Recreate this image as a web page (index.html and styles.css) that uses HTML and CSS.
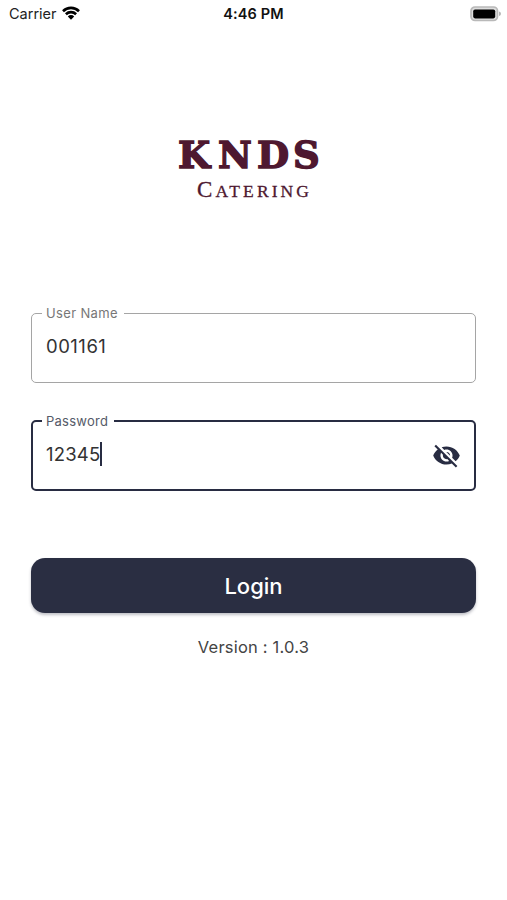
FILE: index.html
```html
<!DOCTYPE html>
<html lang="en">
<head>
    <meta charset="UTF-8">
    <meta name="viewport" content="width=device-width, initial-scale=1.0">
    <title>KNDS Catering - Login</title>
    <link rel="stylesheet" href="styles.css">
</head>
<body>
    <header class="status-bar">
        <div class="carrier">
            <span>Carrier</span>
            <svg class="wifi" width="18" height="14" viewBox="0 0 18 14">
                <path d="M1 5.2a11.4 11.4 0 0 1 16 0M3.9 8.2a7.3 7.3 0 0 1 10.2 0" fill="none" stroke="#000" stroke-width="2.6"/>
                <path d="M5.8 10.4a4.6 4.6 0 0 1 6.4 0L9 13.8z"/>
            </svg>
        </div>
        <div class="time">4:46 PM</div>
        <svg class="battery" width="31" height="16" viewBox="0 0 31 16">
            <rect x="1" y="1" width="26.5" height="13.5" rx="4" fill="#ddd" stroke="#b9b9b9" stroke-width="1.7"/>
            <rect x="3.2" y="3.4" width="22" height="9" rx="1.8"/>
            <path d="M29 5.5q2 .5 2 2.3t-2 2.3z" fill="#b5b5b5"/>
        </svg>
    </header>

    <main>
        <svg class="logo" width="160" height="88" viewBox="0 0 160 88">
            <text class="logo-name" x="7 47 86 122" y="47">KNDS</text>
            <text class="logo-sub" x="26" y="76" textLength="112"><tspan class="logo-cap">C</tspan>ATERING</text>
        </svg>

        <form id="loginForm">
            <fieldset class="field">
                <legend>User Name</legend>
                <span class="value username">001161</span>
            </fieldset>
            <fieldset class="field focused">
                <legend>Password</legend>
                <span class="value password">12345<i class="caret"></i></span>
                <svg class="eye" width="29" height="29" viewBox="0 0 24 24">
                    <path d="M12 7c2.76 0 5 2.24 5 5 0 .65-.13 1.26-.36 1.83l2.92 2.92c1.51-1.26 2.7-2.89 3.43-4.75-1.73-4.39-6-7.5-11-7.5-1.4 0-2.74.25-3.98.7l2.16 2.16C10.74 7.13 11.35 7 12 7zM2 4.27l2.28 2.28.46.46C3.08 8.3 1.78 10.02 1 12c1.73 4.39 6 7.5 11 7.5 1.55 0 3.03-.3 4.38-.84l.42.42L19.73 22 21 20.73 3.27 3 2 4.27zM7.53 9.8l1.55 1.55c-.05.21-.08.43-.08.65 0 1.66 1.34 3 3 3 .22 0 .44-.03.65-.08l1.55 1.55c-.67.33-1.41.53-2.2.53-2.76 0-5-2.24-5-5 0-.79.2-1.53.53-2.2zm4.31-.78l3.15 3.15.02-.16c0-1.66-1.34-3-3-3l-.17.01z"/>
                </svg>
            </fieldset>
            <button type="button">Login</button>
        </form>
        <p class="version">Version : 1.0.3</p>
    </main>
</body>
</html>
```
FILE: styles.css
```css
body {
    margin: 0;
    height: 900px;
    font-family: Inter, sans-serif;
    background-color: #fff;
    overflow: hidden;
}
.status-bar {
    display: grid;
    grid-template-columns: 1fr auto 1fr;
    align-items: center;
    height: 27px;
    padding: 0 6px 0 9px;
    font-size: 14.5px;
    color: #222;
}
.carrier {
    display: flex;
    align-items: center;
    gap: 5px;
}
.wifi {
    margin-top: -2px;
}
.time {
    margin-right: 3px;
    font-weight: 600;
    letter-spacing: 0.1px;
    color: #111;
}
.battery {
    justify-self: end;
}
main {
    display: flex;
    flex-direction: column;
    padding: 94px 31px 0;
}
.logo {
    align-self: center;
    margin-right: 5px;
}
.logo-name {
    font: bold 37px "DejaVu Serif", serif;
    fill: #4e1830;
    stroke: #4e1830;
    stroke-width: 1.4px;
}
.logo-sub {
    font: 17.5px "Liberation Serif", serif;
    fill: #4e1830;
    stroke: #4e1830;
    stroke-width: 0.3px;
}
.logo-cap {
    font-size: 23px;
}
form {
    display: flex;
    flex-direction: column;
    margin-top: 96px;
}
.field {
    display: flex;
    justify-content: space-between;
    box-sizing: border-box;
    height: 78px;
    min-width: 0;
    margin: 0 0 30px;
    padding: 0 14px 0 10px;
    border: 1.5px solid #a5a5a5;
    border-radius: 5px;
}
legend {
    height: 16px;
    padding: 0 6px 0 4px;
    font-size: 13px;
    line-height: 16px;
    letter-spacing: 0.35px;
    color: #777;
}
.value {
    display: flex;
    height: 25px;
    margin-top: 13px;
    padding-left: 4px;
    font-size: 18.5px;
    line-height: 25px;
    color: #333;
}
.username {
    letter-spacing: 0.5px;
}
.password {
    letter-spacing: 0.2px;
}
.caret {
    width: 2px;
    height: 24px;
    background: #282c42;
}
.focused {
    padding: 0 13px 0 9px;
    border: 2.5px solid #282c42;
}
.focused legend {
    letter-spacing: 0.25px;
    color: #555a68;
}
.eye {
    margin: 12px 0 0;
    fill: #282c42;
}
button {
    height: 55px;
    margin-top: 37px;
    border: none;
    border-radius: 14px;
    background: #2a2e42;
    box-shadow: 0 2px 3px rgba(42, 46, 66, 0.3);
    color: #fff;
    font: 500 22px Inter, sans-serif;
}
.version {
    margin: 23px 0 0;
    text-align: center;
    font-size: 16.5px;
    letter-spacing: 0.2px;
    line-height: 22px;
    color: #444;
}
```
